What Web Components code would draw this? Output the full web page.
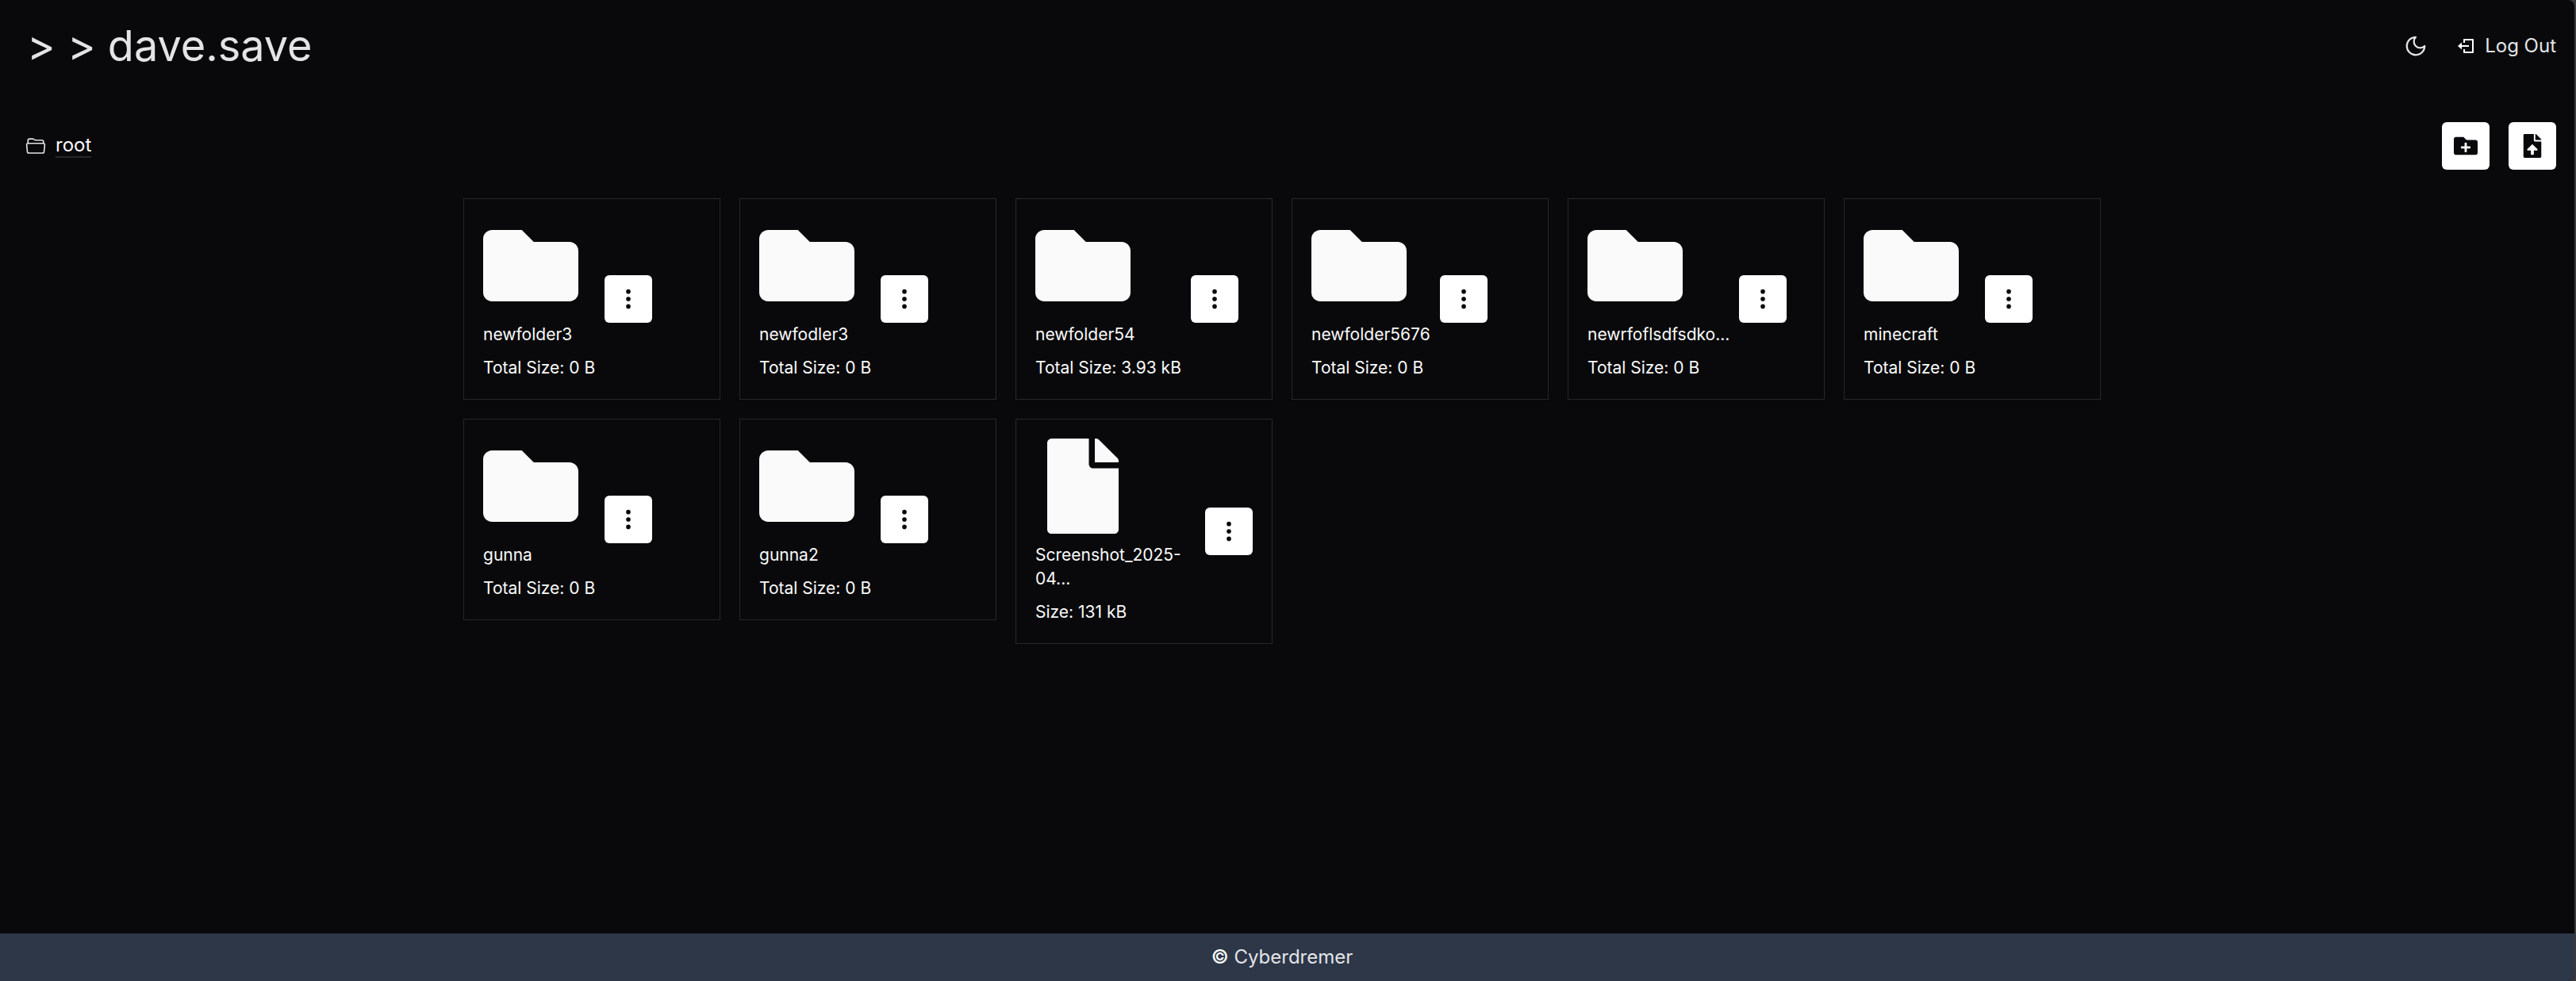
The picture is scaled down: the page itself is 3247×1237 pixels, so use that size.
<!DOCTYPE html>
<html lang="en">
<head>
<meta charset="utf-8">
<title>dave.save</title>
<style>
html{height:100%;background:#3a3a3a}
body{margin:0;min-height:100%;display:flex;font-family:Inter,"Liberation Sans",sans-serif;font-size:24px;line-height:36px;color:#fafafa}
</style>
</head>
<body>
<save-app></save-app>
<script>
const icons={
folder:['0 0 512 512','<path d="M464 128H272l-64-64H48C21.49 64 0 85.49 0 112v288c0 26.51 21.49 48 48 48h416c26.51 0 48-21.49 48-48V176c0-26.51-21.49-48-48-48z"/>'],
file:['0 0 384 512','<path d="M224 136V0H24C10.7 0 0 10.7 0 24v464c0 13.3 10.7 24 24 24h336c13.3 0 24-10.7 24-24V160H248c-13.2 0-24-10.8-24-24zm160-14.1v6.1H256V0h6.1c6.4 0 12.5 2.5 17 7l97.9 98c4.5 4.5 7 10.6 7 16.9z"/>'],
dots:['0 0 16 16','<path d="M9.5 13a1.5 1.5 0 1 1-3 0 1.5 1.5 0 0 1 3 0m0-5a1.5 1.5 0 1 1-3 0 1.5 1.5 0 0 1 3 0m0-5a1.5 1.5 0 1 1-3 0 1.5 1.5 0 0 1 3 0"/>'],
folderPlus:['0 0 512 512','<path d="M464,128H272L208,64H48A48,48,0,0,0,0,112V400a48,48,0,0,0,48,48H464a48,48,0,0,0,48-48V176A48,48,0,0,0,464,128ZM359.5,296a16,16,0,0,1-16,16h-64v64a16,16,0,0,1-16,16h-16a16,16,0,0,1-16-16V312h-64a16,16,0,0,1-16-16V280a16,16,0,0,1,16-16h64V200a16,16,0,0,1,16-16h16a16,16,0,0,1,16,16v64h64a16,16,0,0,1,16,16Z"/>'],
fileUp:['0 0 384 512','<path d="M224 136V0H24C10.7 0 0 10.7 0 24v464c0 13.3 10.7 24 24 24h336c13.3 0 24-10.7 24-24V160H248c-13.2 0-24-10.8-24-24zm65.2 216H224v80c0 8.8-7.2 16-16 16h-32c-8.8 0-16-7.2-16-16v-80H94.8c-14.3 0-21.4-17.3-11.3-27.4l96.4-95.7c6.7-6.6 17.4-6.6 24 0l96.4 95.7c10.2 10.1 3.1 27.4-11.1 27.4zM377 105L279.1 7c-4.5-4.5-10.6-7-17-7H256v128h128v-6.1c0-6.3-2.5-12.4-7-16.9z"/>'],
moon:['0 0 24 24','<path fill="none" stroke="currentColor" stroke-width="1.8" stroke-linecap="round" stroke-linejoin="round" d="M12 3a6 6 0 0 0 9 9 9 9 0 1 1-9-9Z"/>'],
logout:['0 0 24 24','<path fill="none" stroke="currentColor" stroke-width="2" stroke-linejoin="round" d="M10 8V4h11v16H10v-4M6 12h10"/><path d="M2 12l5-4.500v9z"/>'],
open:['0 0 512 512','<g fill="none" stroke="currentColor" stroke-width="32" stroke-linecap="round" stroke-linejoin="round"><path d="M64 192v-72a40 40 0 0 1 40-40h75.890a40 40 0 0 1 22.190 6.720l27.840 18.560a40 40 0 0 0 22.190 6.720H408a40 40 0 0 1 40 40v40"/><path d="M479.900 226.550L463.680 392a40 40 0 0 1-39.930 40H88.250a40 40 0 0 1-39.930-40L32.100 226.550A32 32 0 0 1 64 192h384.100a32 32 0 0 1 31.800 34.550z"/></g>']
};
class SaveElement extends HTMLElement{
 constructor(){super();this.attachShadow({mode:'open'});}
 connectedCallback(){this.shadowRoot.innerHTML=this.view();}
}
customElements.define('save-icon',class extends SaveElement{
 view(){const [box,art]=icons[this.getAttribute('name')];
 return `<style>:host{display:block;flex:none}svg{display:block;width:100%;height:100%;fill:currentColor}</style><svg viewBox="${box}" aria-hidden="true">${art}</svg>`}
});
customElements.define('icon-button',class extends SaveElement{
 view(){return `<style>:host{display:block;flex:none}
 button{display:grid;place-items:center;width:60px;height:60px;padding:0;border:0;border-radius:6px;background:#fff;color:#09090b;cursor:pointer}
 save-icon{width:30px;height:30px}</style>
 <button type="button" aria-label="${this.getAttribute('label')}"><save-icon name="${this.getAttribute('icon')}"></save-icon></button>`}
});
customElements.define('save-header',class extends SaveElement{
 view(){return `<style>:host{display:flex;align-items:center;justify-content:space-between;padding:28px 23px 28px 34px}
 h1{margin:0;font-size:54px;line-height:60px;font-weight:400;color:#e4e4e7}
 nav{display:flex;align-items:center;gap:36px;color:#e4e4e7}
 button,a{color:inherit;font:inherit;background:none;border:0;padding:0;text-decoration:none}
 a{display:flex;align-items:center;gap:12px}
 .moon{width:30px;height:30px}.out{width:24px;height:24px;color:#fff}</style>
 <h1>&gt; &gt; dave.save</h1>
 <nav><button type="button" aria-label="Theme"><save-icon class="moon" name="moon"></save-icon></button>
 <a href="#"><save-icon class="out" name="logout"></save-icon>Log Out</a></nav>`}
});
customElements.define('path-bar',class extends SaveElement{
 view(){return `<style>:host{display:flex;align-items:center;justify-content:space-between;padding:38px 23px 36px 32px}
 nav,.tools{display:flex;align-items:center}nav{gap:12px}.tools{gap:24px}
 save-icon{width:26px;height:26px;color:#e4e4e7}
 a{color:inherit;text-decoration:none;line-height:28px;border-bottom:2px solid #27272a}</style>
 <nav aria-label="Path"><save-icon name="open"></save-icon><a href="#">root</a></nav>
 <div class="tools"><icon-button icon="folderPlus" label="New folder"></icon-button><icon-button icon="fileUp" label="Upload file"></icon-button></div>`}
});
customElements.define('entry-card',class extends SaveElement{
 view(){return `<style>:host{display:flex;align-items:center;gap:12px;padding:24px;border:1px solid #27272a;font-size:21px;line-height:30px}
 .info{display:flex;flex-direction:column;gap:12px;min-width:0}
 save-icon{width:120px;height:120px}p{margin:0}</style>
 <div class="info"><save-icon name="${this.getAttribute('kind')}"></save-icon><p><slot></slot></p><p><slot name="size"></slot></p></div>
 <icon-button icon="dots" label="Options"></icon-button>`}
});
customElements.define('entry-grid',class extends SaveElement{
 view(){return `<style>:host{display:grid;grid-template-columns:repeat(6,324px);gap:24px;justify-content:center;align-items:start;padding-right:13px}</style><slot></slot>`}
});
customElements.define('save-footer',class extends SaveElement{
 view(){return `<style>:host{display:block;padding:12px 13px 12px 0;background:#2d3748;color:#e4e4e7;text-align:center}b{font-weight:500;color:#fff}</style><b>©</b> Cyberdremer`}
});
const entries=[['folder','newfolder3','Total Size: 0 B'],['folder','newfodler3','Total Size: 0 B'],['folder','newfolder54','Total Size: 3.93 kB'],['folder','newfolder5676','Total Size: 0 B'],['folder','newrfoflsdfsdko...','Total Size: 0 B'],['folder','minecraft','Total Size: 0 B'],['folder','gunna','Total Size: 0 B'],['folder','gunna2','Total Size: 0 B'],['file','Screenshot_2025-04...','Size: 131 kB']];
customElements.define('save-app',class extends SaveElement{
 view(){return `<style>:host{display:flex;flex-direction:column;flex:1;margin-right:2px;background:#09090b;border-radius:0 8px 8px 0;overflow:hidden}main{flex:1}</style>
 <save-header></save-header><main><path-bar></path-bar><entry-grid>${entries.map(([k,n,s])=>`<entry-card kind="${k}">${n}<span slot="size">${s}</span></entry-card>`).join('')}</entry-grid></main><save-footer></save-footer>`}
});
</script>
</body>
</html>
